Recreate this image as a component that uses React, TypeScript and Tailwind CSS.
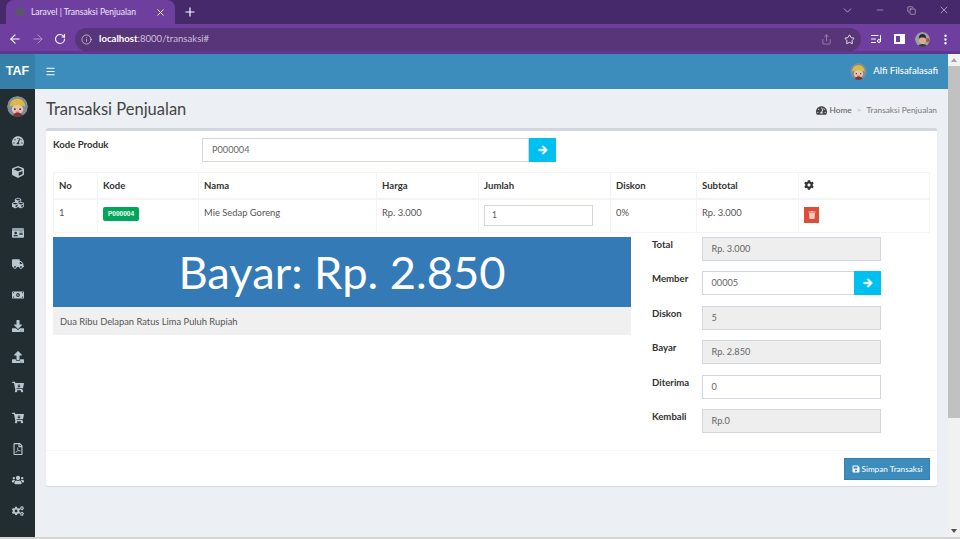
import React from "react";
import { ArrowLeft, ArrowRight, RotateCw, Info, Share, Star, ListMusic, X, Plus, ChevronDown, Minus, Copy, EllipsisVertical, Menu } from "lucide-react";
import { FaTachometerAlt, FaCube, FaCubes, FaIdCard, FaTruck, FaMoneyBillAlt, FaDownload, FaUpload, FaCartArrowDown, FaRegFilePdf, FaUsers, FaCogs, FaCog, FaTrash, FaSave, FaArrowRight } from "react-icons/fa";

const Avatar = ({ size }: { size: number }) => (
  <svg width={size} height={size} viewBox="0 0 24 24" className="shrink-0 rounded-full">
    <circle cx="12" cy="12" r="12" fill="#7f8d99" />
    <ellipse cx="12" cy="15" rx="6.5" ry="6" fill="#e9c3ae" />
    <path d="M3 12c1-8 5-9 9-9s8 2 9 9c-5-2-13-2-18 0z" fill="#d9bb45" />
    <path d="M7 24c0-4 2-5 5-5s6 1 6 5z" fill="#7c3340" />
    <circle cx="9" cy="15" r="1" fill="#333" />
    <circle cx="15" cy="15" r="1" fill="#333" />
    <path d="M10 18.5h4" stroke="#b03040" strokeWidth="1" />
  </svg>
);

const ProfileAvatar = () => (
  <svg width={15} height={15} viewBox="0 0 24 24" className="shrink-0 rounded-full">
    <circle cx="12" cy="12" r="12" fill="#9aa3a6" />
    <ellipse cx="12" cy="13" rx="5.5" ry="6.5" fill="#d8ad90" />
    <path d="M6 11c0-6 3-8 6-8s6 2 6 8c-3-3-9-3-12 0z" fill="#2c2a2a" />
    <path d="M5 24c0-4 3-5 7-5s7 1 7 5z" fill="#3b3b3b" />
    <rect x="18" y="10" width="5" height="6" fill="#b0523c" />
  </svg>
);

const sideIcons = [FaTachometerAlt, FaCube, FaCubes, FaIdCard, FaTruck, FaMoneyBillAlt, FaDownload, FaUpload, FaCartArrowDown, FaCartArrowDown, FaRegFilePdf, FaUsers, FaCogs];

const GoIcon = () => <FaArrowRight size={10} stroke="currentColor" strokeWidth={30} />;

const FieldRow = ({ label, value, disabled, button }: { label: string; value: string; disabled?: boolean; button?: boolean }) => (
  <div className="flex">
    <div className="w-[50px] shrink-0 pt-px text-[9.6px] font-bold leading-[14px] text-[#333]">{label}</div>
    <div className={`flex h-6 w-[179px] items-center border border-[#d2d6de] pl-[8.5px] text-[9.2px] text-[#666] ${disabled ? "bg-[#eeeeee]" : "bg-white"}`}>
      <span className="flex-1">{value}</span>
      {button && (
        <span className="-mr-px flex h-6 w-[27px] items-center justify-center bg-[#00c0ef] text-white">
          <GoIcon />
        </span>
      )}
    </div>
  </div>
);

const headers: [string, string][] = [
  ["No", "w-[44px]"],
  ["Kode", "w-[101px]"],
  ["Nama", "w-[178px]"],
  ["Harga", "w-[102px]"],
  ["Jumlah", "w-[132px]"],
  ["Diskon", "w-[86px]"],
  ["Subtotal", "w-[102px]"],
];

export default function App() {
  return (
    <div className="flex h-[539px] w-[960px] flex-col overflow-hidden bg-[#ecf0f5] font-['Lato','Open_Sans',sans-serif]">
      {/* browser tab strip */}
      <div className="flex h-6 shrink-0 items-end bg-[#46296a] text-white">
        <div className="ml-[6px] flex h-6 w-[169px] items-center rounded-t-lg bg-[#6f3fa0] pl-[9px] pr-[9px]">
          <span className="h-[10px] w-[10px] rounded-full bg-[#5b5570]" />
          <span className="ml-[6px] flex-1 truncate text-[8.5px] text-[#f0e8f8]">Laravel | Transaksi Penjualan</span>
          <X size={11} strokeWidth={2} />
        </div>
        <div className="ml-[8px] flex h-6 items-center">
          <Plus size={14} strokeWidth={2} />
        </div>
        <div className="flex-1" />
        <div className="flex h-6 items-center pb-[4px] text-[#e4dcec]">
          <ChevronDown size={13} strokeWidth={1.2} className="mr-[21px]" />
          <Minus size={10} strokeWidth={1.2} className="mr-[22px]" />
          <Copy size={9} strokeWidth={1.4} className="mr-[22px]" />
          <X size={12} strokeWidth={1.2} className="mr-[10px]" />
        </div>
      </div>
      {/* browser toolbar */}
      <div className="flex h-[30px] shrink-0 items-center border-b-[3px] border-[#5f3690] bg-[#6f3fa0] pt-[3px] text-white">
        <ArrowLeft size={14} strokeWidth={2} className="ml-[8px]" />
        <ArrowRight size={14} strokeWidth={1.6} className="ml-[9px] text-[#b79ad0]" />
        <RotateCw size={12} strokeWidth={2.2} className="ml-[9px]" />
        <div className="ml-[9px] flex h-[23px] w-[786px] shrink-0 items-center rounded-full bg-[#583478] pl-[6px] pr-[6px]">
          <Info size={11} strokeWidth={1.5} className="text-[#e5dcee]" />
          <span className="ml-[6px] flex-1 pl-[1px] text-[9.6px] text-[#cdbfdc]">
            <span className="font-bold text-white">localhost</span>:8000/transaksi#
          </span>
          <Share size={11} strokeWidth={1.4} className="mr-[12px] text-[#b7a4cc]" />
          <Star size={11} strokeWidth={1.8} />
        </div>
        <ListMusic size={12} strokeWidth={2} className="ml-[9px] shrink-0" />
        <span className="ml-[11.5px] h-[10px] w-[11px] shrink-0 border-[2px] border-r-[5px] border-white" />
        <span className="ml-[10px] shrink-0"><ProfileAvatar /></span>
        <EllipsisVertical size={13} strokeWidth={2.4} className="ml-[9px] shrink-0" />
      </div>
      <div className="flex min-h-0 flex-1">
        <div className="flex min-w-0 flex-1 flex-col">
          {/* app header */}
          <div className="flex h-[35px] shrink-0 items-center bg-[#3c8dbc] text-white">
            <div className="flex h-[35px] w-[35px] items-center justify-center bg-[#367fa9] font-['Liberation_Sans',sans-serif] text-[12.5px] font-bold">TAF</div>
            <Menu size={11} strokeWidth={2.4} className="ml-[10px]" />
            <div className="flex-1" />
            <Avatar size={17} />
            <span className="ml-[6px] mr-[10px] text-[9.5px] font-medium">Alfi Filsafalasafi</span>
          </div>
          <div className="flex min-h-0 flex-1">
            {/* sidebar */}
            <div className="flex w-[35px] shrink-0 flex-col items-center bg-[#222d32] pt-[7px] text-[#b8c7ce]">
              <Avatar size={21} />
              <div className="mt-[18px] flex flex-col items-center gap-[18.8px]">
                {sideIcons.map((I, i) => (
                  <I key={i} size={12} />
                ))}
              </div>
            </div>
            {/* content */}
            <div className="min-w-0 flex-1 px-[11px]">
              <div className="flex h-[40px] items-center justify-between">
                <h1 className="text-[16.5px] text-[#444]">Transaksi Penjualan</h1>
                <div className="flex items-center pt-[2px] text-[8.3px] text-[#777]">
                  <FaTachometerAlt size={11} className="mr-[3px] text-[#444]" />
                  <span className="text-[#555]">Home</span>
                  <span className="mx-[5px] text-[#bbb]">&gt;</span>
                  <span>Transaksi Penjualan</span>
                </div>
              </div>
              <div className="-mt-px h-[358px] rounded-[2px] border-t-[3px] border-[#d2d6de] bg-white shadow-[0_1px_1px_rgba(0,0,0,0.1)]">
                <div className="px-[7px] pt-[7px]">
                  <div className="flex">
                    <div className="w-[149px] text-[9.6px] font-bold leading-[14px] text-[#333]">Kode Produk</div>
                    <div className="flex h-6 w-[354px]">
                      <div className="flex h-6 flex-1 items-center border border-[#d2d6de] pl-[9px] text-[9.2px] text-[#666]">P000004</div>
                      <span className="flex h-6 w-[27px] items-center justify-center bg-[#00c0ef] text-white">
                        <GoIcon />
                      </span>
                    </div>
                  </div>
                  <table className="mt-[10px] w-[877px] table-fixed border-collapse text-[9.4px] text-[#555]">
                    <thead>
                      <tr className="h-[26px] border-b-2 border-[#f4f4f4] text-left text-[9.6px] text-[#333]">
                        {headers.map(([h, w]) => (
                          <th key={h} className={`${w} border border-b-2 border-[#f4f4f4] pl-[5px] pt-px font-bold`}>{h}</th>
                        ))}
                        <th className="border border-b-2 border-[#f4f4f4] pl-[5px]"><FaCog size={10} /></th>
                      </tr>
                    </thead>
                    <tbody>
                      <tr className="h-[34px]">
                        <td className="border border-[#f4f4f4] pl-[5px] pb-[5px]">1</td>
                        <td className="border border-[#f4f4f4] pl-[5px] pb-[4px]">
                          <span className="inline-block rounded-[2px] bg-[#00a65a] px-[5px] py-[2px] font-['Liberation_Sans',sans-serif] text-[6.5px] font-bold leading-[10px] text-white">P000004</span>
                        </td>
                        <td className="border border-[#f4f4f4] pl-[5px] pb-[5px]">Mie Sedap Goreng</td>
                        <td className="border border-[#f4f4f4] pl-[5px] pb-[5px]">Rp. 3.000</td>
                        <td className="border border-[#f4f4f4] pl-[5px]">
                          <div className="flex h-[21px] w-[109px] items-center border border-[#d2d6de] pl-[7px] text-[8.5px]">1</div>
                        </td>
                        <td className="border border-[#f4f4f4] pl-[5px] pb-[5px]">0%</td>
                        <td className="border border-[#f4f4f4] pl-[5px] pb-[5px]">Rp. 3.000</td>
                        <td className="border border-[#f4f4f4] pl-[5px] pb-[2px]">
                          <span className="flex h-[16px] w-[15px] items-center justify-center bg-[#dd4b39] text-[#f6c6bf]"><FaTrash size={8} /></span>
                        </td>
                      </tr>
                    </tbody>
                  </table>
                  <div className="mt-[4px] flex">
                    <div className="w-[578px] shrink-0">
                      <div className="flex h-[70px] items-center justify-center bg-[#337ab7] text-[45.3px] text-white">Bayar: Rp. 2.850</div>
                      <div className="flex h-[28px] items-center bg-[#f0f0f0] pl-[7px] pt-[2px] text-[9.35px] text-[#555]">Dua Ribu Delapan Ratus Lima Puluh Rupiah</div>
                    </div>
                    <div className="ml-[21px] flex flex-col gap-[10.4px]">
                      <FieldRow label="Total" value="Rp. 3.000" disabled />
                      <FieldRow label="Member" value="00005" button />
                      <FieldRow label="Diskon" value="5" disabled />
                      <FieldRow label="Bayar" value="Rp. 2.850" disabled />
                      <FieldRow label="Diterima" value="0" />
                      <FieldRow label="Kembali" value="Rp.0" disabled />
                    </div>
                  </div>
                </div>
                <div className="mt-[17px] flex h-[36px] justify-end border-t border-[#f4f4f4] px-[7px] pt-[7px]">
                  <span className="flex h-[22px] w-[86px] items-center justify-center gap-[2px] border border-[#367fa9] bg-[#3c8dbc] text-[8.2px] text-white">
                    <FaSave size={8} /> Simpan Transaksi
                  </span>
                </div>
              </div>
            </div>
          </div>
        </div>
        {/* page scrollbar */}
        <div className="flex w-[12px] shrink-0 flex-col items-center bg-[#f1f1f1]">
          <span className="mt-[4px] h-0 w-0 border-x-[3px] border-b-[4px] border-x-transparent border-b-[#a3a3a3]" />
          <span className="mt-[4px] h-[352px] w-full bg-[#c1c1c1]" />
          <span className="flex-1" />
          <span className="mb-[4px] h-0 w-0 border-x-[3px] border-t-[4px] border-x-transparent border-t-[#505050]" />
        </div>
      </div>
      <div className="h-[2px] shrink-0 bg-[#d4d4d4]" />
    </div>
  );
}
